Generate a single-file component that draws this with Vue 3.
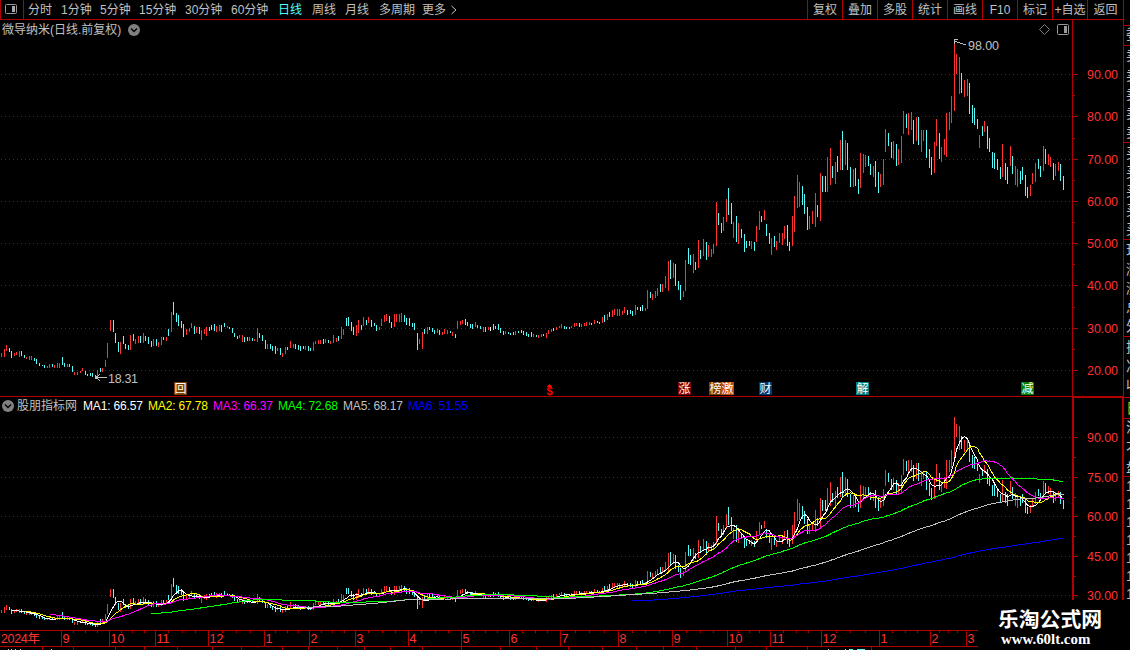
<script setup>
const periods = [
  { label: '分时' }, { label: '1分钟' }, { label: '5分钟' }, { label: '15分钟' },
  { label: '30分钟' }, { label: '60分钟' }, { label: '日线', active: true },
  { label: '周线' }, { label: '月线' }, { label: '多周期' }, { label: '更多' },
]
const tools = ['复权', '叠加', '多股', '统计', '画线', 'F10', '标记', '+自选', '返回']

// Price bars: x, high, low in thirds of a pixel from each block's origin.
// r = rising, c = falling, w = flat.
const blocks = [
  {
    ox: 0, oy: 290,
    bars: `4r189-201 13r177-201 19r165-183 28c174-186 34c183-204 43r189-198 49r186-195 58r183-201 64c183-198 73c195-204 79r201-207 88r198-210 94r198-210 103c204-213 109c207-222 118c219-228 127c225-228 133c225-234 142r228-234 148r222-234 157c222-231 163r225-234 172r219-234 178r219-234 187c201-225 193c219-231 202r222-231 208c222-231 217c228-246 223r246-255 232r246-255 241r243-249 247r234-243 256c243-255 262c252-258 271c249-258 277c249-261 286c255-264 292r240-264 301c234-246 307r234-246 316r210-231 322r159-204 331r90-123 340c90-126 346c129-159 355c156-186 361r156-192 370c138-162 376c162-177 385c165-180 391r135-180 400c132-153 406r147-162 415r138-159 421c138-159 430r129-159 436c138-153 445c141-162 454c153-171 460r147-168 469c147-168 475r156-171 484r141-165 490c141-150 499r141-153 505c117-138 514r66-126 520c36-75 529c69-96 535c75-108 544c93-114 550c102-141 559r117-135 568r114-126 574r99-114 583c108-132 589r111-129 598c111-132 604r120-150 613r117-132 619r111-138 628c111-123 634c105-120 643c102-123 649r108-126 658r105-123 664c105-126 673c99-111 682r108-114 688c111-117 697c114-129 703c129-141 712c138-147 718r135-144 727r135-156 733c141-156 742c141-153 748r141-153 757c144-153 763r147-153 772r114-156 778c129-144 787c135-153 796c150-177 802r162-177 811c162-177 817c168-183 826c168-192 832r174-183 841c174-195 847r189-201 856r171-192 862c171-180 871r153-174 880r162-174 886c162-177 895c165-180 901c168-183 910c168-177 916r168-180 925c168-183 931c174-183 940r156-183 946r153-162 955r150-162 961r150-162 970c147-162 976r147-159 985c150-159 991r153-162 1000r135-159 1009r144-156 1015c138-153 1024r111-147 1030r117-135 1039c84-108 1045c81-108 1054c96-123 1060c111-135 1069r105-138 1075r90-129`,
  },
  {
    ox: 360, oy: 290,
    bars: `4c105-120 10r81-108 19c90-105 25r81-99 34c90-111 43c99-108 49c105-123 58r111-120 64r87-108 73r75-96 79r72-93 88c78-99 94c96-114 103r72-111 109r72-96 118r72-96 124r69-96 133c75-96 139c84-105 148c84-108 157c99-111 163c99-120 172c129-180 178r147-162 187r126-177 193c117-132 202r111-132 208c111-120 217c114-126 223c120-132 232r117-129 238c120-135 247r126-135 253r117-132 262r120-132 271c123-129 277r126-138 286c132-144 292r93-117 301r93-105 307r90-102 316c87-105 322c96-108 331c102-114 337c102-117 346r96-111 352c105-114 361c108-117 370r111-126 376c111-126 385r111-120 391w111-123 400c102-120 406c108-117 415c102-120 421c114-129 430c123-135 436r123-132 445c126-132 451c129-135 460c126-135 466r123-135 475c123-129 484c120-129 490c123-135 499c126-138 505c132-141 514c126-141 520r132-141 529c135-141 535r135-144 544r132-141 550c132-138 559r129-144 565r120-132 574r117-126 580c114-123 589r111-120 598r108-114 604r102-114 613c108-117 619c111-117 628c111-117 634r108-114 643r99-111 649r99-108 658c99-111 664r102-111 673r99-108 679r96-108 688r96-105 694c99-105 703r90-102 712c93-99 718c96-102 727r81-99 733c75-96 742r72-90 748c66-81 757r60-81 763r57-75 772r57-78 778r57-78 787r63-75 793r51-69 802c60-75 811c60-72 817c63-78 826r45-75 832c51-60`,
  },
  {
    ox: 640, oy: 180,
    bars: `1w381-393 7c375-393 16r384-393 22r330-387 31c336-354 37r342-360 46r333-354 52r324-348 61c312-336 67r312-336 76r288-324 85r243-333 91c240-297 100r249-294 106c252-318 115c303-330 121c315-360 130r333-351 136r240-333 145c204-252 151c225-255 160r222-279 166c246-270 175r180-264 181c210-237 190r177-228 199c186-240 205r195-231 214r207-231 220r192-222 229r66-198 235c99-135 244c129-159 250r111-153 259r57-126 265c24-105 274c69-132 280r126-174 289c108-186 295r129-192 304c147-174 313c162-216 319c183-204 328c183-198 334r183-207 343c186-213 349r138-186 358r93-150 364c108-126 373r90-120 379c132-168 388c159-192 394r174-225 403c168-201 409r183-210 418r159-189 427r159-195 433r138-177 442c135-198 448c186-213 457r108-198 463r48-156 472r-15-84 478r6-81 487c18-75 493c42-102 502c81-150 508r108-147 517r93-132 526r39-141 532c75-111 541r-21-123 547c-12-36 556c-12-36 562r-69-36 571r-96-15 577c-42--6 586r-54-12 592c-72--24 601r-120--30 607c-147--30 616r-120--45 622c-111--30`,
  },
  {
    ox: 850, oy: 30,
    bars: `1c411-471 10r417-471 16c414-468 25c447-492 31r369-474 40r372-429 46r375-411 55c378-408 61c402-435 70r408-441 76c393-471 85c426-489 91r432-471 100r387-465 106r297-366 115c309-348 124c336-384 130r333-387 139c342-408 145r357-405 154r318-399 160r243-312 169c252-294 175r249-315 184r246-300 190c270-342 199r261-333 205c261-345 214r300-366 220r300-333 229c300-384 238c357-414 244c381-435 253r336-429 259r267-348 268c309-387 274r351-396 283r327-375 289r249-381 298r246-300 304r198-279 313r39-243 319r72-132 328r81-192 334c129-189 343r150-201 352r147-198 358c159-252 367c225-279 373c234-285 382c267-297 388r315-354 397c288-318 403r273-306 412c288-357 418c324-366 427c366-414 433c369-417 442c387-420 451c411-447 457r342-441 466c399-450 472c411-462 481r348-408 487c378-432 496r408-465 502r417-471 511c423-462 517c411-450 526c435-498 532c471-504 541r465-498 547r429-462 556r399-456 565c387-417 571c408-441 580r348-423 586c357-402 595r372-405 601r381-411 610c399-450 616r402-438 625r396-423 631c402-453 640c438-480`,
  },
]
const fills = { r: '#ff3232', c: '#54fcfc', w: '#ffffff' }
const bars = blocks.flatMap(({ ox, oy, bars }) =>
  bars.split(' ').map((entry) => {
    const [, x, kind, hi, lo] = entry.match(/^(\d+)([rcw])(-?\d+)-(-?\d+)$/)
    return { x: ox + Math.floor(x / 3), kind, top: oy + hi / 3, bottom: oy + lo / 3 }
  }),
)
const toLower = (y) => 437.5 + (y - 74.5) * 0.6228
const lowerBars = bars.map((b) => {
  const top = Math.round(toLower(b.top)) - 1
  return { ...b, top, bottom: Math.max(top + 2, Math.round(toLower(b.bottom))) }
})
const closes = bars.map((b) => {
  const mid = (b.top + b.bottom) / 2
  const lean = (b.bottom - b.top) * 0.2
  return toLower(b.kind === 'r' ? mid - lean : b.kind === 'c' ? mid + lean : mid)
})
function average(n) {
  const points = []
  let sum = 0
  closes.forEach((y, i) => {
    sum += y
    if (i >= n) sum -= closes[i - n]
    if (i >= n - 1) points.push(`${bars[i].x + 0.5},${(sum / n).toFixed(1)}`)
  })
  return points.join(' ')
}
const averages = [
  { name: 'MA1', value: '66.57', color: '#ffffff', n: 5 },
  { name: 'MA2', value: '67.78', color: '#ffff00', n: 10 },
  { name: 'MA3', value: '66.37', color: '#ff00ff', n: 20 },
  { name: 'MA4', value: '72.68', color: '#00ff00', n: 60 },
  { name: 'MA5', value: '68.17', color: '#c0c0c0', n: 120 },
  { name: 'MA6', value: '51.55', color: '#0000ff', n: 250 },
].map((m) => ({ ...m, points: average(m.n) }))

const upperScale = [[74, '90.00'], [116, '80.00'], [159, '70.00'], [201, '60.00'], [243, '50.00'], [285, '40.00'], [328, '30.00'], [370, '20.00']]
const upperMinor = [95, 138, 180, 222, 264, 307, 349]
const lowerScale = [[437, '90.00'], [477, '75.00'], [516, '60.00'], [556, '45.00'], [595, '30.00']]
const lowerMinor = [457, 497, 536, 576]

const events = [
  { x: 174, text: '回', bg: '#804000' },
  { x: 678, text: '涨', bg: '#800000' },
  { x: 709, text: '榜', bg: '#804000' },
  { x: 721, text: '激', bg: '#c04a10' },
  { x: 759, text: '财', bg: '#003a70' },
  { x: 856, text: '解', bg: '#008080' },
  { x: 1021, text: '减', bg: '#008000' },
]

const months = [[61, '9'], [109, '10'], [155, '11'], [208, '12'], [264, '1'], [309, '2'], [355, '3'], [408, '4'], [461, '5'], [509, '6'], [560, '7'], [618, '8'], [672, '9'], [727, '10'], [770, '11'], [821, '12'], [879, '1'], [930, '2'], [966, '3']]
const weekTicks = months.slice(0, -1).flatMap(([x], i) => {
  const step = (months[i + 1][0] - x) / 4
  return [1, 2, 3].map((k) => Math.round(x + step * k))
})
const footTicks = [42, 73, 115, 144, 177, 212, 241, 282, 308, 337, 364, 390, 422, 461, 500, 536, 568, 602, 636, 663, 696, 735, 766, 807, 871]

const quoteLines = [25, 45, 142, 239, 336, 397, 418, 476]
const quotes = [
  [39, '委'], [60, '卖'], [80, '卖'], [99, '卖'], [118, '卖'], [137, '卖'],
  [158, '买'], [177, '买'], [196, '买'], [215, '买'], [234, '买'],
  [255, '现'], [274, '涨'], [293, '涨'], [312, '总'], [331, '外'],
  [352, '换'], [371, '净'], [390, '收'], [413, '日', '#c0c000'],
  [432, '沪'], [453, '不'], [472, '盘'],
  [491, '1'], [509, '1'], [527, '1'], [545, '1'], [563, '1'], [581, '1'], [599, '1'],
]
</script>

<template>
  <div class="app">
    <header class="toolbar">
      <div class="panel-toggle">
        <svg width="12" height="10" viewBox="0 0 12 10">
          <rect x=".5" y=".5" width="11" height="9" rx="1" fill="none" stroke="#999" />
          <rect x="7" y="2" width="3" height="6" fill="#aaa" />
        </svg>
      </div>
      <nav class="periods">
        <span v-for="p in periods" :key="p.label" :class="{ active: p.active }">{{ p.label }}</span>
        <svg width="6" height="10" viewBox="0 0 6 10"><path d="M.5 1 L5 5 L.5 9" fill="none" stroke="#c0c0c0" /></svg>
      </nav>
      <div class="tools"><span v-for="t in tools" :key="t">{{ t }}</span></div>
    </header>

    <div class="body">
      <main class="charts">
        <section class="panel upper">
          <svg class="plot" width="1124" height="377" viewBox="0 20 1124 377" shape-rendering="crispEdges">
            <line v-for="[y] in upperScale" :key="y" x1="1" x2="1072" :y1="y + 0.5" :y2="y + 0.5" class="grid" />
            <path d="M1072.5 20V397M1123.5 20V397M0 396.5H1124" class="frame" />
            <path v-for="[y] in upperScale" :key="'t' + y" :d="`M1073 ${y + 0.5}h5`" class="frame" />
            <path v-for="y in upperMinor" :key="'m' + y" :d="`M1073 ${y + 0.5}h2`" class="frame" />
            <text v-for="[y, t] in upperScale" :key="'l' + y" x="1087" :y="y + 5" class="scale" textLength="31">{{ t }}</text>
            <rect v-for="(b, i) in bars" :key="'b' + i" :x="b.x" :y="b.top" width="1" :height="b.bottom - b.top" :fill="fills[b.kind]" />
            <path d="M966 45L962 43.5L955 41.5M954 39.5H958M954.5 39V44" class="pointer" />
            <text x="968" y="50" class="note" textLength="31">98.00</text>
            <path d="M107 377.5H96M100 374L96 377.5L100 381" class="pointer" />
            <rect x="95" y="376" width="3" height="3" fill="#c0c0c0" />
            <text x="108" y="383" class="note" textLength="30">18.31</text>
            <g v-for="e in events" :key="e.x">
              <rect :x="e.x" y="382" width="13" height="13" :fill="e.bg" />
              <text :x="e.x + 0.5" y="393" class="event">{{ e.text }}</text>
            </g>
            <path d="M547 386.5H552M548 385.5H551M549 384.5H550" stroke="#f00" />
            <text x="546.5" y="395" class="dollar">$</text>
          </svg>
          <div class="title">
            <span class="name">微导纳米(日线.前复权)</span>
            <svg width="12" height="12" viewBox="0 0 12 12">
              <circle cx="6" cy="6" r="6" fill="#808080" /><path d="M3 4.5L6 7.5L9 4.5" fill="none" stroke="#000" stroke-width="1.4" />
            </svg>
            <span class="title-icons">
              <svg width="11" height="11" viewBox="0 0 11 11"><path d="M5.5 .5L10.5 5.5L5.5 10.5L.5 5.5Z" fill="none" stroke="#808080" /></svg>
              <svg width="12" height="11" viewBox="0 0 12 11">
                <rect x=".5" y=".5" width="11" height="10" rx="1" fill="none" stroke="#999" /><rect x="7" y="2" width="3" height="7" fill="#999" />
              </svg>
            </span>
          </div>
        </section>

        <section class="panel lower">
          <svg class="plot" width="1124" height="233" viewBox="0 397 1124 233" shape-rendering="crispEdges">
            <line v-for="[y] in lowerScale" :key="y" x1="1" x2="1072" :y1="y + 0.5" :y2="y + 0.5" class="grid" />
            <path d="M1072 397.5H1124" class="frame" />
            <path d="M1073 397V600M1123 397V600" class="frame thick" />
            <path v-for="[y] in lowerScale" :key="'t' + y" :d="`M1074 ${y + 0.5}h4`" class="frame" />
            <path v-for="y in lowerMinor" :key="'m' + y" :d="`M1074 ${y + 0.5}h2`" class="frame" />
            <text v-for="[y, t] in lowerScale" :key="'l' + y" x="1087" :y="y + 5" class="scale" textLength="31">{{ t }}</text>
            <rect v-for="(b, i) in lowerBars" :key="'b' + i" :x="b.x" :y="b.top" width="1" :height="b.bottom - b.top" :fill="fills[b.kind]" />
            <polyline v-for="m in averages" :key="m.name" :points="m.points" :stroke="m.color" fill="none" />
          </svg>
          <div class="legend">
            <svg width="12" height="12" viewBox="0 0 12 12">
              <circle cx="6" cy="6" r="6" fill="#808080" /><path d="M3 4.5L6 7.5L9 4.5" fill="none" stroke="#000" stroke-width="1.4" />
            </svg>
            <span class="source">股朋指标网</span>
            <svg class="values" width="400" height="16" viewBox="0 0 400 16">
              <text v-for="(m, i) in averages" :key="m.name" :x="i * 65" y="12" :fill="m.color" textLength="60">{{ m.name }}: {{ m.value }}</text>
            </svg>
          </div>
        </section>

        <svg class="dates" width="1124" height="20" viewBox="0 630 1124 20" shape-rendering="crispEdges">
          <path d="M0 630.5H978M0 646.5H978" class="frame" />
          <path v-for="x in weekTicks" :key="'w' + x" :d="`M${x + 0.5} 631v2`" class="frame" />
          <path v-for="x in footTicks" :key="'f' + x" :d="`M${x + 0.5} 647v3`" class="frame" />
          <text x="1" y="643" class="scale" textLength="39">2024年</text>
          <g v-for="[x, t] in months" :key="x">
            <path :d="`M${x + 0.5} 631v15`" class="frame" />
            <text :x="x + 1.5" y="643" class="scale">{{ t }}</text>
          </g>
          <path d="M8 649.5h1M11 649.5h1M15 649.5h1M20 649.5h1M51 649.5h1M828 649.5h1" stroke="#c0c0c0" />
          <path d="M845 649.5h1M849 649.5h4M857 649.5h8" stroke="#54fcfc" />
        </svg>
      </main>

      <aside class="quotes">
        <svg width="6" height="630" viewBox="1124 20 6 630">
          <path v-for="y in quoteLines" :key="y" :d="`M1124 ${y + 0.5}h6`" class="frame" shape-rendering="crispEdges" />
          <text v-for="[y, t, c] in quotes" :key="y" x="1126" :y="y" :fill="c || '#c0c0c0'">{{ t }}</text>
        </svg>
      </aside>
    </div>

    <div class="watermark">
      <strong>乐淘公式网</strong>
      <span>www.60lt.com</span>
    </div>
  </div>
</template>

<style>
html, body { background: #000; overflow: hidden; }
</style>

<style scoped>
.app {
  position: relative;
  width: 1130px;
  height: 650px;
  overflow: hidden;
  background: #000;
  color: #c0c0c0;
  font: 12px/19px "Liberation Sans", "Noto Sans CJK SC", sans-serif;
}
.app svg { display: block; flex: none; }
.toolbar { display: flex; width: 1124px; height: 20px; box-sizing: border-box; border-bottom: 1px solid #b00000; }
.panel-toggle { width: 24px; box-sizing: border-box; padding: 4px 0 0 4px; border: solid #b00000; border-width: 0 1px; }
.periods {
  display: grid;
  grid-template-columns: 33px 39px 39px 46px 46px 47px 34px 33px 34px 43px 29px 6px;
  align-items: center;
  padding-left: 4px;
  white-space: nowrap;
}
.periods span, .tools span { line-height: 21px; height: 19px; }
.periods .active { color: #54fcfc; }
.tools { display: flex; margin-left: auto; border-right: 1px solid #b00000; }
.tools span { width: 35px; box-sizing: border-box; border-left: 1px solid #b00000; text-align: center; white-space: nowrap; }
.tools span:last-child { width: 36px; }
.body { display: flex; }
.charts { width: 1124px; }
.panel { display: grid; }
.panel > * { grid-area: 1 / 1; }
.title, .legend { display: flex; align-items: center; height: 19px; white-space: nowrap; }
.title { padding-left: 2px; }
.title .name { width: 126px; line-height: 21px; height: 19px; }
.title-icons { display: flex; gap: 7px; margin-left: auto; margin-right: 55px; }
.legend { height: 17px; padding-left: 2px; }
.legend .source { width: 66px; padding-left: 3px; line-height: 21px; height: 19px; }
.values text { font-size: 12px; }
.grid { stroke: #b00000; stroke-dasharray: 1 3; }
.frame { fill: none; stroke: #b00000; }
.frame.thick { stroke-width: 2; }
.scale { fill: #ff3232; font-size: 12.5px; }
.note { fill: #c0c0c0; font-size: 12.5px; }
.pointer { fill: none; stroke: #c0c0c0; }
.event { fill: #fff; font-size: 12px; }
.dollar { fill: #f00; font-size: 11px; font-weight: bold; }
.quotes { width: 6px; overflow: hidden; }
.quotes text { font-size: 14px; }
.watermark {
  position: absolute;
  left: 978px;
  top: 600px;
  width: 152px;
  height: 50px;
  box-sizing: border-box;
  padding: 4px 0 0 20px;
  background: #000;
  color: #fff;
}
.watermark strong { display: block; font: bold 20.8px/28px "Noto Sans CJK SC", sans-serif; }
.watermark span { display: block; padding-left: 3px; font: bold 14.9px/15px "Liberation Serif", serif; }
</style>
